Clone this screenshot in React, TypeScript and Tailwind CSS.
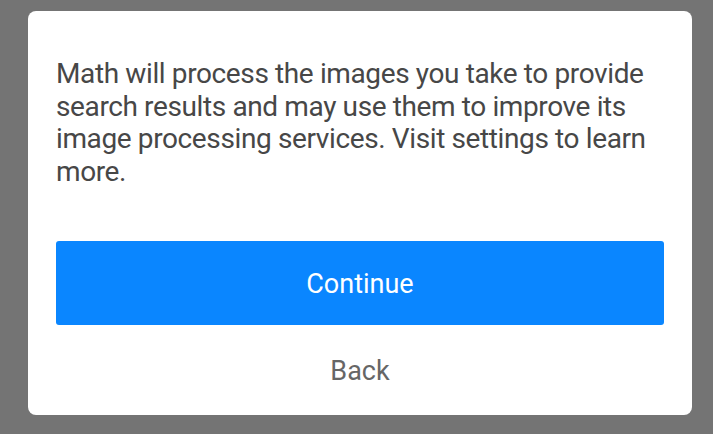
import React from 'react';

export default function App() {
  return (
    <div className="w-[713px] h-[434px] bg-[#747474] pt-[11px] pl-[28px] font-['Roboto',sans-serif]">
      <div className="bg-white rounded-[8px] w-[664px] h-[404px] px-[28px] pt-[47px] flex flex-col">
        <p className="text-[28px] leading-[32.5px] tracking-[-0.38px] text-[#474747]">
          Math will process the images you take to provide search results and may use them to improve its image processing services. Visit settings to learn more.
        </p>
        <button className="mt-[53px] h-[84px] w-full shrink-0 bg-[#0a86ff] rounded-[3px] text-white text-[27px] pt-[2px]">
          Continue
        </button>
        <button className="h-[90px] w-full shrink-0 text-[#666666] text-[27px] pt-[2px]">
          Back
        </button>
      </div>
    </div>
  );
}
